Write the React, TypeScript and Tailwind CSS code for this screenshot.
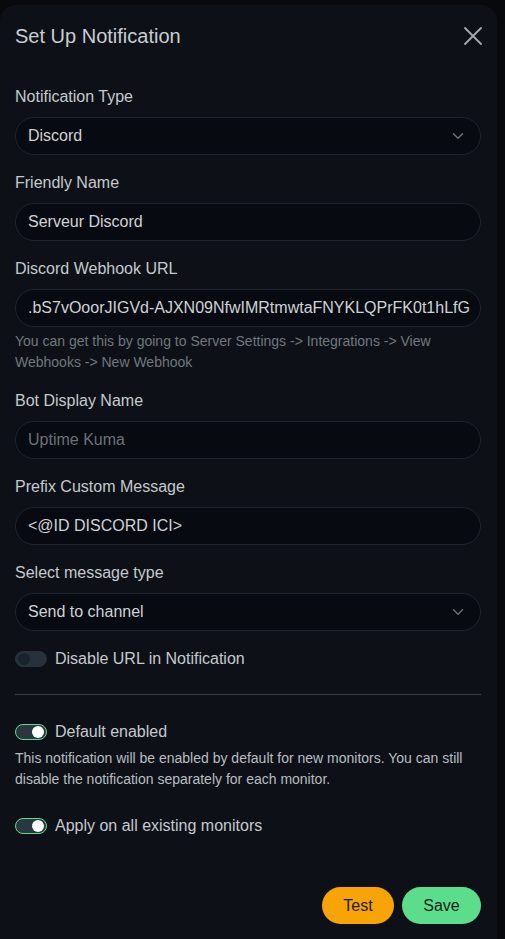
import React, { useState } from "react";

// Chevron for the select boxes
function Chevron() {
  return (
    <svg width="12" height="8" viewBox="0 0 12 8" className="absolute right-[16px] top-1/2 -translate-y-1/2">
      <path d="M1.5 1.8 6 6.2l4.5-4.4" fill="none" stroke="#6b7178" strokeWidth="1.4" strokeLinecap="round" strokeLinejoin="round" />
    </svg>
  );
}

function Field({ label, children }: { label: string; children: React.ReactNode }) {
  return (
    <div className="mb-4">
      <div className="mb-2 h-6 leading-6 text-[16px] text-[#c5c9cd]">{label}</div>
      {children}
    </div>
  );
}

function Box({ children, select, muted }: { children: React.ReactNode; select?: boolean; muted?: boolean }) {
  return (
    <div
      className={
        "relative flex h-[38px] items-center overflow-hidden whitespace-nowrap rounded-full border border-[#1d2531] bg-[#070a10] px-3 text-[16px] " +
        (muted ? "text-[#6b7178]" : "text-[#cfd2d5]")
      }
    >
      {children}
      {select && <Chevron />}
    </div>
  );
}

function Switch({ on, label, onToggle }: { on: boolean; label: string; onToggle: () => void }) {
  return (
    <div className="flex h-6 items-center gap-2 text-[16px] text-[#c5c9cd]" onClick={onToggle}>
      <div
        className={
          "relative h-4 w-8 shrink-0 rounded-full border " +
          (on ? "border-[#5cdd8b] bg-[#2a3741]" : "border-[#26313c] bg-[#26313c]")
        }
      >
        <div
          className={
            "absolute top-1/2 h-[12px] w-[12px] -translate-y-1/2 rounded-full " +
            (on ? "right-[2px] bg-white" : "left-[2px] bg-[#1a222b]")
          }
        />
      </div>
      <span>{label}</span>
    </div>
  );
}

export default function App() {
  const [disableUrl, setDisableUrl] = useState(false);
  const [defEnabled, setDefEnabled] = useState(true);
  const [applyAll, setApplyAll] = useState(true);

  return (
    <div className="h-[939px] w-[505px] overflow-hidden bg-[#07090c] pt-[5px]" style={{ fontFamily: '"Liberation Sans", Arial, sans-serif' }}>
      <div className="flex h-[950px] w-[497px] flex-col rounded-[16px] bg-[#0d1117]">
        {/* header */}
        <div className="flex items-center justify-between pl-[15px] pr-[15px] pt-4 pb-4">
          <h5 className="h-[30px] text-[20px] leading-[30px] text-[#c9cdd1]">Set Up Notification</h5>
          <svg width="18" height="18" viewBox="0 0 18 18">
            <path d="M1 1l16 16M17 1 1 17" stroke="#a4a9ae" strokeWidth="1.8" strokeLinecap="round" />
          </svg>
        </div>

        {/* body */}
        <div className="pl-[15px] pr-[16px] pt-[18px]">
          <Field label="Notification Type">
            <Box select>Discord</Box>
          </Field>
          <Field label="Friendly Name">
            <Box>Serveur Discord</Box>
          </Field>
          <div className="mb-4">
            <div className="mb-2 h-6 leading-6 text-[16px] text-[#c5c9cd]">Discord Webhook URL</div>
            <Box>.bS7vOoorJIGVd-AJXN09NfwIMRtmwtaFNYKLQPrFK0t1hLfG</Box>
            <div className="mt-1 text-[14px] leading-[21px] text-[#70777e]">
              You can get this by going to Server Settings -&gt; Integrations -&gt; View Webhooks -&gt; New Webhook
            </div>
          </div>
          <Field label="Bot Display Name">
            <Box muted>Uptime Kuma</Box>
          </Field>
          <Field label="Prefix Custom Message">
            <Box>&lt;@ID DISCORD ICI&gt;</Box>
          </Field>
          <Field label="Select message type">
            <Box select>Send to channel</Box>
          </Field>

          <Switch on={disableUrl} label="Disable URL in Notification" onToggle={() => setDisableUrl(!disableUrl)} />

          <hr className="mt-[23px] mb-[25px] border-t border-[#3a4047]" />

          <Switch on={defEnabled} label="Default enabled" onToggle={() => setDefEnabled(!defEnabled)} />
          <div className="mt-1 text-[14px] leading-[21px] text-[#b9bdc1]">
            This notification will be enabled by default for new monitors. You can still disable the notification separately for each monitor.
          </div>

          <div className="mt-6">
            <Switch on={applyAll} label="Apply on all existing monitors" onToggle={() => setApplyAll(!applyAll)} />
          </div>
        </div>

        {/* footer */}
        <div className="mt-[49px] flex justify-end gap-2 pr-[16px]">
          <button className="h-[37px] w-[72px] rounded-full bg-[#f8a306] text-[16px] text-[#1a1d20]">Test</button>
          <button className="h-[37px] w-[79px] rounded-full bg-[#5cdd8b] text-[16px] text-[#1a1d20]">Save</button>
        </div>
      </div>
    </div>
  );
}
